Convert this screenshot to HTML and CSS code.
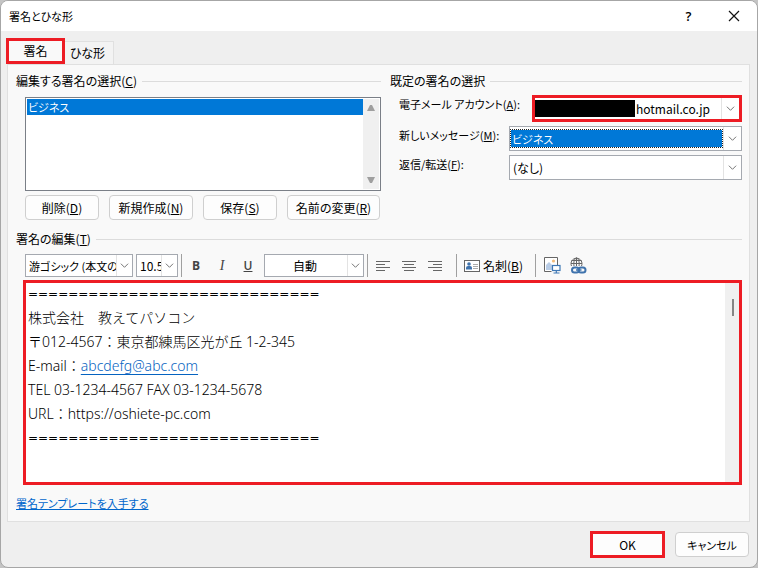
FILE: index.html
```
<!DOCTYPE html>
<html lang="ja">
<head>
<meta charset="UTF-8" />
<meta name="viewport" content="width=device-width, initial-scale=1" />
<title>署名とひな形</title>
<link rel="stylesheet" href="styles.css">
</head>
<body>
  <div class="dialog">
    <!-- Title bar -->
    <header class="titlebar">
      <h1>署名とひな形</h1>
      <button type="button" class="title-btn help" aria-label="ヘルプ">?</button>
      <button type="button" class="title-btn" aria-label="閉じる">
        <svg width="12" height="12" viewBox="0 0 12 12"><path d="M1 1l10 10M11 1L1 11" stroke="#111" stroke-width="1.2" fill="none"/></svg>
      </button>
    </header>

    <!-- Tabs -->
    <div class="tabs" role="tablist">
      <button type="button" class="tab active" role="tab" aria-selected="true">署名</button>
      <button type="button" class="tab" role="tab" aria-selected="false">ひな形</button>
    </div>

    <main class="panel">
      <div class="columns">
        <section>
          <h2 class="legend"><label for="signatures">編集する署名の選択(<u>C</u>)</label></h2>
          <div class="group">
            <div class="listbox">
              <select id="signatures" size="5">
                <option selected>ビジネス</option>
              </select>
              <div class="list-scroll">
                <svg width="10" height="8" viewBox="0 0 10 8"><path d="M1 7L4 1h2l3 6z" fill="#9f9f9f"/></svg>
                <svg width="10" height="8" viewBox="0 0 10 8"><path d="M1 1l3 6h2l3-6z" fill="#9f9f9f"/></svg>
              </div>
            </div>
            <div class="list-buttons">
              <button type="button" class="btn">削除(<u>D</u>)</button>
              <button type="button" class="btn medium">新規作成(<u>N</u>)</button>
              <button type="button" class="btn">保存(<u>S</u>)</button>
              <button type="button" class="btn wide">名前の変更(<u>R</u>)</button>
            </div>
          </div>
        </section>

        <section>
          <h2 class="legend">既定の署名の選択</h2>
          <div class="group defaults">
            <div class="field">
              <label for="account">電子メール アカウント(<u>A</u>):</label>
              <div class="combo account marked">
                <select id="account"><option>hotmail.co.jp</option></select>
                <svg class="arrow" viewBox="0 0 10 6"><path d="M1 1l4 4 4-4"/></svg>
              </div>
            </div>
            <div class="field">
              <label for="new-message">新しいメッセージ(<u>M</u>):</label>
              <div class="combo focused">
                <select id="new-message"><option>ビジネス</option></select>
                <svg class="arrow" viewBox="0 0 10 6"><path d="M1 1l4 4 4-4"/></svg>
              </div>
            </div>
            <div class="field">
              <label for="reply">返信/転送(<u>F</u>):</label>
              <div class="combo">
                <select id="reply"><option>(なし)</option></select>
                <svg class="arrow" viewBox="0 0 10 6"><path d="M1 1l4 4 4-4"/></svg>
              </div>
            </div>
          </div>
        </section>
      </div>

      <h2 class="legend edit-legend"><span id="edit-label">署名の編集(<u>T</u>)</span></h2>

      <!-- Formatting toolbar -->
      <div class="toolbar">
        <div class="combo font-name">
          <select aria-label="フォント"><option>游ゴシック (本文のフォント)</option></select>
          <svg class="arrow" viewBox="0 0 10 6"><path d="M1 1l4 4 4-4"/></svg>
        </div>
        <div class="combo font-size">
          <select aria-label="フォント サイズ"><option>10.5</option></select>
          <svg class="arrow" viewBox="0 0 10 6"><path d="M1 1l4 4 4-4"/></svg>
        </div>
        <span class="sep"></span>
        <div class="styles">
          <button type="button" class="tool bold" aria-label="太字">B</button>
          <button type="button" class="tool italic" aria-label="斜体">I</button>
          <button type="button" class="tool underline" aria-label="下線">U</button>
        </div>
        <div class="combo font-color">
          <select aria-label="フォントの色"><option>自動</option></select>
          <svg class="arrow" viewBox="0 0 10 6"><path d="M1 1l4 4 4-4"/></svg>
        </div>
        <span class="sep"></span>
        <div class="aligns">
          <button type="button" class="tool" aria-label="左揃え">
            <svg width="16" height="12" viewBox="0 0 16 12"><path d="M1 1.5h14M1 4.5h9M1 7.5h14M1 10.5h9" stroke="#666"/></svg>
          </button>
          <button type="button" class="tool" aria-label="中央揃え">
            <svg width="16" height="12" viewBox="0 0 16 12"><path d="M1 1.5h14M3 4.5h10M1 7.5h14M3 10.5h10" stroke="#666"/></svg>
          </button>
          <button type="button" class="tool" aria-label="右揃え">
            <svg width="16" height="12" viewBox="0 0 16 12"><path d="M1 1.5h14M6 4.5h9M1 7.5h14M6 10.5h9" stroke="#666"/></svg>
          </button>
        </div>
        <span class="sep"></span>
        <button type="button" class="tool card">
          <svg width="16" height="12" viewBox="0 0 16 12">
            <rect x=".5" y=".5" width="15" height="11" fill="#fff" stroke="#666"/>
            <circle cx="5" cy="4" r="1.8" fill="#3f73ad"/>
            <path d="M2 9.5V8q0-2 2-2h2q2 0 2 2v1.5z" fill="#3f73ad"/>
            <path d="M9 4.5h5M9 6.5h5M9 8.5h5" stroke="#aaa"/>
          </svg>
          <span>名刺(<u>B</u>)</span>
        </button>
        <span class="sep"></span>
        <div class="inserts">
          <button type="button" class="tool" aria-label="画像の挿入">
            <svg width="17" height="17" viewBox="0 0 17 17">
              <path d="M7.500 14.500H.5V.5h13V8" fill="#fff" stroke="#666"/>
              <circle cx="9.500" cy="4" r="1.600" fill="#f3bd7c"/>
              <path d="M2 13V8l3-3 3 3v5z" fill="#b8cce6"/>
              <rect x="8.500" y="8.500" width="7.500" height="5" fill="#fff" stroke="#3f78b5" stroke-width="1.200"/>
              <path d="M12.300 13.500v2M9.500 16h6" stroke="#3f78b5" stroke-width="1.200"/>
            </svg>
          </button>
          <button type="button" class="tool" aria-label="ハイパーリンクの挿入">
            <svg width="17" height="17" viewBox="0 0 17 17" fill="none">
              <g stroke="#666">
                <path d="M1.500 9A5.500 5.500 0 1 1 11.500 9"/>
                <path d="M4 9C3.300 5 4.500 1.500 6.500.8 8.500 1.500 9.700 5 9 9M6.500.8V9M1.500 3.500h10M1 6.500h11"/>
              </g>
              <g stroke="#3f73ad" stroke-width="2">
                <rect x="2" y="10.500" width="7" height="5" rx="2.500"/>
                <rect x="8.500" y="10.500" width="7" height="5" rx="2.500"/>
              </g>
              <path d="M6 13h5.500" stroke="#3f73ad" stroke-width="1.500"/>
            </svg>
          </button>
        </div>
      </div>

      <!-- Signature body -->
      <div class="editor marked">
        <div class="editor-text" contenteditable="true" role="textbox" aria-multiline="true" aria-labelledby="edit-label" spellcheck="false">
          <p class="rule">=============================</p>
          <p>株式会社　教えてパソコン</p>
          <p>〒012-4567：東京都練馬区光が丘 1-2-345</p>
          <p>E-mail：<a href="mailto:abcdefg@abc.com">abcdefg@abc.com</a></p>
          <p>TEL 03-1234-4567 FAX 03-1234-5678</p>
          <p>URL：https://oshiete-pc.com</p>
          <p class="rule">=============================</p>
        </div>
        <div class="editor-scroll"><span class="thumb"></span></div>
      </div>

      <a class="template-link" href="#">署名テンプレートを入手する</a>
    </main>

    <footer class="footer">
      <button type="button" class="btn ok marked">OK</button>
      <button type="button" class="btn cancel">キャンセル</button>
    </footer>
  </div>
</body>
</html>
```
FILE: styles.css
```
* {
  margin: 0;
  padding: 0;
  box-sizing: border-box;
}

body {
  background: #c4c4c4;
  color: #000;
  font-family: "Noto Sans CJK JP", sans-serif;
  font-size: 12px;
  line-height: 16px;
  font-feature-settings: "palt";
}

button, select {
  font: inherit;
  font-feature-settings: inherit;
  color: inherit;
}

h1, h2 {
  font-size: 12px;
  font-weight: normal;
}

.dialog {
  display: flex;
  flex-direction: column;
  min-height: 100vh;
  background: #efefef;
  border: 1px solid #a6a6a6;
  border-radius: 8px;
  overflow: hidden;
}

/* red frame round the important parts */
.marked {
  border: 3px solid #ed1c24 !important;
  border-radius: 0 !important;
}

/* Title bar */
.titlebar {
  display: flex;
  align-items: center;
  height: 30px;
  padding: 0 1px 0 8px;
  background: #fff;
}

.titlebar h1 {
  flex: 1;
  font-size: 11px;
}

.title-btn {
  display: flex;
  align-items: center;
  justify-content: center;
  width: 45px;
  height: 30px;
  border: 0;
  background: none;
}

.help {
  font-family: "Open Sans", sans-serif;
  font-size: 13px;
  font-weight: 600;
}

/* Tabs */
.tabs {
  display: flex;
  align-items: flex-end;
  padding: 7px 5px 0;
}

.tab {
  height: 23px;
  padding: 0 8px 0 5px;
  background: #f3f3f3;
  border: 1px solid #e0e0e0;
  border-width: 1px 1px 0 0;
}

.tab.active {
  width: 59px;
  height: 26px;
  padding: 0;
  background: #f9f9f9;
  border: 3px solid #ed1c24;
}

/* Panel */
.panel {
  flex: 1;
  display: flex;
  flex-direction: column;
  margin: 0 7px 0 6px;
  padding: 8px 7px 10px 8px;
  background: #f9f9f9;
  border: 1px solid #e0e0e0;
}

.columns {
  display: grid;
  grid-template-columns: 365fr 352fr;
  gap: 9px;
}

.legend {
  display: flex;
  align-items: center;
  gap: 5px;
}

.legend::after {
  content: "";
  flex: 1;
  height: 1px;
  background: #dcdcdc;
}

.group {
  padding: 8px 0 0 9px;
}

.listbox {
  display: flex;
  height: 94px;
  padding: 1px;
  background: #fff;
  border: 1px solid #7a7f87;
}

.listbox select {
  flex: 1;
  min-width: 0;
  border: 0;
  border-radius: 0;
  outline: 0;
  overflow: hidden;
  background: #fff;
  font-size: 11px;
}

.listbox option {
  min-height: 15px;
  padding: 0 1px;
  line-height: 15px;
}

.listbox option:checked {
  background: #0078d7 linear-gradient(#0078d7, #0078d7);
  color: #fff;
}

.list-scroll {
  display: flex;
  flex-direction: column;
  align-items: center;
  justify-content: space-between;
  width: 16px;
  padding: 5px 0;
  background: #f0f0f0;
}

.list-buttons {
  display: flex;
  gap: 10px;
  padding-top: 4px;
}

.btn {
  width: 74px;
  height: 25px;
  background: #fdfdfd;
  border: 1px solid #cfcfcf;
  border-radius: 4px;
  white-space: nowrap;
}

.btn.medium {
  width: 84px;
}

.btn.wide {
  width: 93px;
}

/* Combo boxes */
.combo {
  display: flex;
  align-items: center;
  width: 233px;
  height: 25px;
  background: #fff;
  border: 1px solid #a5a9b0;
}

.combo select {
  flex: 1;
  min-width: 0;
  height: 100%;
  padding-left: 3px;
  appearance: none;
  background: none;
  border: 0;
  border-radius: 0;
  outline: 0;
}

.arrow {
  flex: none;
  width: 18px;
  height: 100%;
  padding: 0 4px;
  border-left: 1px solid #e3e3e3;
  fill: none;
  stroke: #666;
}

.defaults {
  display: flex;
  flex-direction: column;
  gap: 4px;
  padding-top: 6px;
}

.field {
  display: flex;
  justify-content: space-between;
}

.field label {
  padding-top: 1px;
  font-size: 11px;
  white-space: nowrap;
}

.account {
  width: 210px;
  height: 27px;
}

/* the first part of the address is blacked out */
.account select {
  padding-left: 101px;
  background: linear-gradient(#000, #000) 0 2px / 100px 17px no-repeat;
}

.combo.focused select {
  height: 17px;
  margin: 0 1px;
  padding-left: 1px;
  background: #0078d7;
  color: #fff;
  font-size: 11px;
  outline: 1px dotted #222;
}

/* Toolbar */
.edit-legend {
  margin-top: 11px;
}

.toolbar {
  display: flex;
  align-items: center;
  gap: 3px;
  padding: 7px 0 3px 9px;
}

.toolbar .combo {
  height: 23px;
}

.toolbar .font-name {
  width: 108px;
}

.font-name select {
  font-size: 11px;
}

.toolbar .font-size {
  width: 42px;
}

.toolbar .font-color {
  width: 100px;
}

.toolbar .arrow {
  width: 16px;
  padding: 0 3px;
}

.font-color select {
  padding-left: 28px;
}

.sep {
  width: 1px;
  height: 23px;
  background: #a0a0a0;
}

.styles, .aligns, .inserts {
  display: flex;
}

.styles {
  margin-left: -2px;
}

.tool {
  display: flex;
  align-items: center;
  justify-content: center;
  width: 26px;
  height: 22px;
  background: none;
  border: 0;
}

.styles .tool {
  color: #444;
  font-family: "Open Sans", sans-serif;
}

.styles .bold {
  font-weight: bold;
}

.styles .italic {
  font-family: "Liberation Serif", serif;
  font-size: 14px;
  font-style: italic;
}

.styles .underline {
  font-weight: 600;
  text-decoration: underline;
}

.aligns {
  margin-left: -1px;
  padding-right: 5px;
}

.tool.card {
  width: auto;
  gap: 3px;
  padding: 0 9px 0 4px;
}

/* Editor */
.editor {
  flex: 1;
  display: flex;
  margin-left: 7px;
  background: #fff;
}

.editor-text {
  flex: 1;
  margin-top: -1px;
  padding-left: 2px;
  outline: 0;
  font-family: "Noto Sans", "Noto Sans CJK JP", sans-serif;
  font-size: 14px;
  font-weight: 300;
  line-height: 24px;
  font-feature-settings: normal;
}

.editor-text a {
  color: #0563c1;
  text-underline-offset: 3px;
}

.editor-text .rule {
  font-family: "DejaVu Sans", sans-serif;
  font-size: 12px;
  font-weight: 400;
}

.editor-scroll {
  width: 14px;
  padding: 16px 0 0 7px;
  background: #f0f0f0;
}

.thumb {
  display: block;
  width: 2px;
  height: 17px;
  background: #858585;
}

.template-link {
  align-self: flex-start;
  margin-top: 10px;
  color: #0066cc;
  font-size: 11px;
}

/* Footer */
.footer {
  display: flex;
  align-items: center;
  justify-content: flex-end;
  gap: 10px;
  padding: 9px 8px;
}

.ok {
  width: 75px;
  height: 27px;
}

.cancel {
  font-size: 11px;
}
```
